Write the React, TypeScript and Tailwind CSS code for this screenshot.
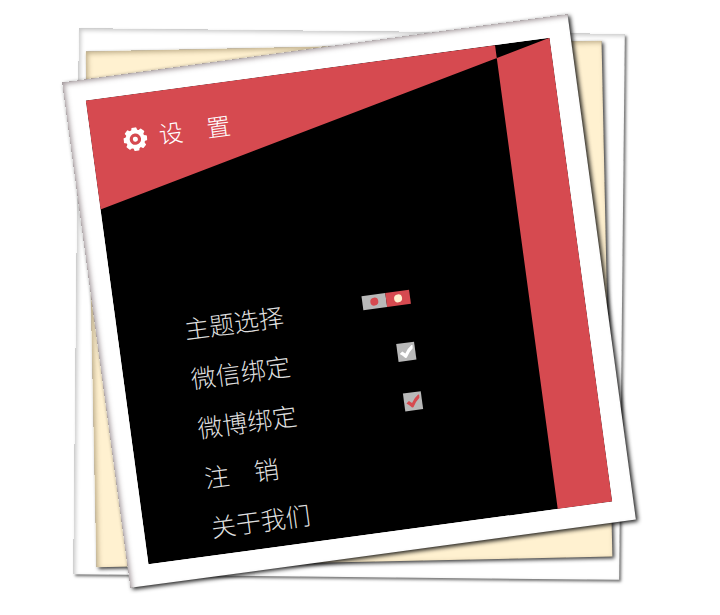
import React from "react";

function Backdrop() {
  return (
    <svg
      className="absolute inset-0 h-full w-full"
      viewBox="0 0 468 468"
      preserveAspectRatio="none"
      aria-hidden="true"
    >
      <rect width="468" height="468" fill="#000" />
      <path
        d="M0 0H413V468H468V0L0 110Z"
        fill="#d64a50"
        fillRule="evenodd"
      />
    </svg>
  );
}

function Gear() {
  const teeth = [0, 45, 90, 135, 180, 225, 270, 315];
  return (
    <svg className="h-6 w-6" viewBox="0 0 24 24" aria-hidden="true">
      <circle cx="12" cy="12" r="7.7" fill="none" stroke="#fff" strokeWidth="4" />
      {teeth.map((a) => (
        <path key={a} d="M8.8 4L9.5 0.8Q9.6 0.2 10.2 0.2H13.8Q14.4 0.2 14.5 0.8L15.2 4Z" fill="#fff" transform={`rotate(${a} 12 12)`} />
      ))}
      <circle cx="12" cy="12" r="2.5" fill="#fff" />
    </svg>
  );
}

function BindCheck({ id, tick }: { id: string; tick: string }) {
  return (
    <span className="relative mr-0.5 flex">
      <input
        id={id}
        type="checkbox"
        defaultChecked
        className="peer size-[18px] appearance-none bg-[#b9b9b9]"
      />
      <svg
        className={`pointer-events-none absolute inset-0 hidden size-[18px] peer-checked:block ${tick}`}
        viewBox="0 0 18 18"
        fill="currentColor"
        aria-hidden="true"
      >
        <path d="M2.2 10.2L5 8.2L7.8 10.6Q10.6 5.8 15 3L16 3.2L15.8 6.4Q11.6 9.6 8.6 15H7.2Q5 12 2.2 10.2Z" />
      </svg>
    </span>
  );
}

export default function App() {
  return (
    <main className="grid min-h-screen place-items-center overflow-hidden bg-white pr-[22px] pb-2 font-['Liberation_Serif','Noto_Sans_CJK_SC',sans-serif]">
      <div className="col-start-1 row-start-1 aspect-square w-full max-w-[546px] rotate-[0.6deg] bg-white shadow-[2px_2px_3px_rgba(0,0,0,0.55),inset_2px_2px_4px_rgba(0,0,0,0.22)]" />
      <div className="col-start-1 row-start-1 aspect-square w-full max-w-[516px] rotate-[-1.2deg] bg-[#fff1d0] shadow-[2px_2px_4px_rgba(0,0,0,0.75),inset_2px_2px_5px_rgba(70,50,10,0.35)]" />
      <section className="col-start-1 row-start-1 mb-1.5 flex aspect-square w-full max-w-[510px] rotate-[-7.7deg] bg-white p-[21px] shadow-[2px_2px_4px_rgba(0,0,0,0.9),inset_3px_3px_5px_-1px_rgba(80,60,65,0.5)]">
        <div className="relative flex-1">
          <Backdrop />
          <div className="relative">
            <header className="flex items-center gap-3 pt-[29px] pl-8">
              <Gear />
              <h1 className="text-2xl leading-8 font-light whitespace-pre text-white">设　置</h1>
            </header>
            <ul className="mt-[156px] ml-[67px] w-[228px] text-[25px] leading-[50px] font-light text-[#dedede]">
              <li className="flex items-center justify-between">
                <span id="theme">主题选择</span>
                <span role="radiogroup" aria-labelledby="theme" className="mb-2 flex">
                  <label className="flex h-3.5 w-6 items-center justify-center bg-[#b9b9b9]">
                    <input type="radio" name="theme" aria-label="灰色" className="size-2 appearance-none rounded-full bg-[#d64a50]" />
                  </label>
                  <label className="flex h-3.5 w-6 items-center justify-center bg-[#d64a50]">
                    <input type="radio" name="theme" aria-label="红色" defaultChecked className="size-2 appearance-none rounded-full bg-[#fff1d0]" />
                  </label>
                </span>
              </li>
              <li className="flex items-center justify-between">
                <label htmlFor="wechat">微信绑定</label>
                <BindCheck id="wechat" tick="text-white" />
              </li>
              <li className="flex items-center justify-between">
                <label htmlFor="weibo">微博绑定</label>
                <BindCheck id="weibo" tick="text-[#d64a50]" />
              </li>
              <li>
                <button type="button" className="block whitespace-pre">注　销</button>
              </li>
              <li>
                <button type="button" className="block">关于我们</button>
              </li>
            </ul>
          </div>
        </div>
      </section>
    </main>
  );
}
